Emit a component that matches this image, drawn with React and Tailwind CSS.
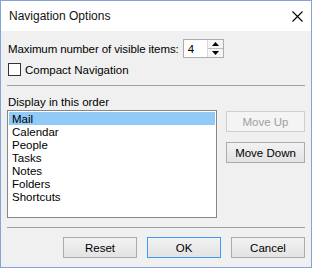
import React from "react";

const items = ["Mail", "Calendar", "People", "Tasks", "Notes", "Folders", "Shortcuts"];

function Button({ children, disabled, primary, className = "" }) {
  let tone = "border-[#acacac] bg-linear-to-b from-[#f2f2f2] to-[#e3e3e3] text-black";
  if (disabled) tone = "border-[#cfcfcf] bg-[#f4f4f4] text-[#a0a0a0]";
  if (primary) tone = "border-[#3c9cf5] bg-linear-to-b from-[#f2f2f2] to-[#e3e3e3] text-black";
  return (
    <div className={`h-[21px] border flex items-center justify-center ${tone} ${className}`}>
      {children}
    </div>
  );
}

function SpinBox() {
  return (
    <div className="w-[41px] h-[19px] border border-[#acacac] bg-white flex">
      <div className="flex-1 pl-[4px] flex items-center leading-[14px]">4</div>
      <div className="w-[16px] flex flex-col border-l border-[#dadada] bg-[#f5f5f5]">
        <div className="flex-1 flex items-center justify-center border-b border-[#bdbdbd]">
          <svg width="7" height="4" viewBox="0 0 7 4">
            <path d="M3.5 0 L7 4 L0 4 Z" fill="#000" />
          </svg>
        </div>
        <div className="flex-1 flex items-center justify-center">
          <svg width="7" height="4" viewBox="0 0 7 4">
            <path d="M0 0 L7 0 L3.5 4 Z" fill="#000" />
          </svg>
        </div>
      </div>
    </div>
  );
}

export default function App() {
  return (
    <div
      className="w-[312px] h-[268px] border border-[#85a3d6] bg-[#f0f0f0] flex flex-col text-[11.5px] leading-[14px] text-black"
      style={{ fontFamily: '"Liberation Sans", Arial, sans-serif' }}
    >
      {/* Title bar */}
      <div className="h-[30px] bg-white flex items-center justify-between pl-[8px] pr-[8px]">
        <span className="text-[12px] text-[#111]">Navigation Options</span>
        <svg width="11" height="11" viewBox="0 0 11 11">
          <path d="M0.5 0.5 L10.5 10.5 M10.5 0.5 L0.5 10.5" stroke="#000" strokeWidth="1.1" />
        </svg>
      </div>

      <div className="flex-1 flex flex-col px-[6px]">
        <div className="mt-[8px] h-[19px] flex items-center gap-[4px] pl-[1px]">
          <span className="tracking-[-0.1px]">Maximum number of visible items:</span>
          <SpinBox />
        </div>

        <div className="mt-[5px] h-[13px] flex items-center gap-[4px] pl-[1px]">
          <div className="w-[13px] h-[13px] border border-[#333] bg-white" />
          <span>Compact Navigation</span>
        </div>

        <div className="mt-[9px] h-px bg-[#a0a0a0]" />

        <div className="mt-[9px] pl-[1px]">Display in this order</div>

        <div className="mt-[1px] flex gap-[9px]">
          <div className="w-[210px] h-[108px] border border-[#828790] bg-white p-[1px]">
            {items.map((item, i) => (
              <div
                key={item}
                className={`h-[13px] pl-[3px] flex items-center ${i === 0 ? "bg-[#91c9f7]" : ""}`}
              >
                {item}
              </div>
            ))}
          </div>
          <div className="flex-1 flex flex-col gap-[10px] mt-[1px]">
            <Button disabled>Move Up</Button>
            <Button>Move Down</Button>
          </div>
        </div>

        <div className="mt-[9px] h-px bg-[#a0a0a0]" />

        <div className="mt-[9px] flex justify-end gap-[10px]">
          <Button className="w-[74px]">Reset</Button>
          <Button className="w-[74px]" primary>OK</Button>
          <Button className="w-[74px]">Cancel</Button>
        </div>
      </div>
    </div>
  );
}
